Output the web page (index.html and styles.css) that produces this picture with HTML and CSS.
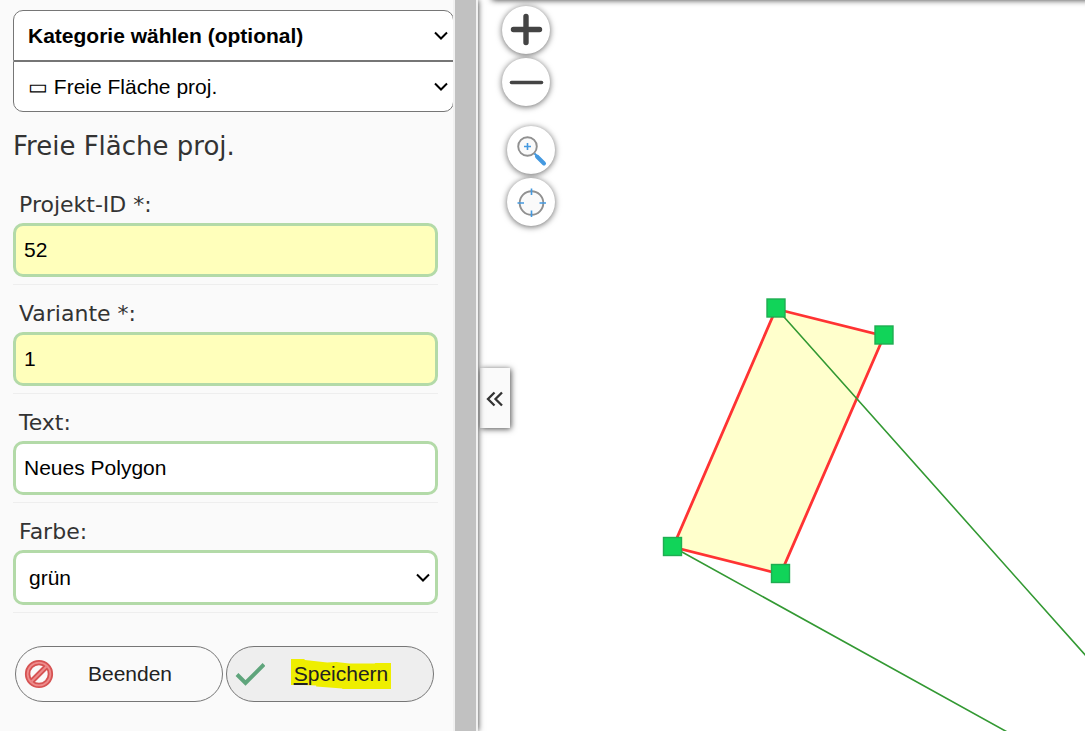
FILE: index.html
```html
<!DOCTYPE html>
<html lang="de">
<head>
<meta charset="utf-8">
<title>Freie Fläche proj.</title>
<link rel="stylesheet" href="styles.css">
</head>
<body>
<div class="app">
  <aside class="sidebar">
    <form class="panel">
      <div class="pickers">
        <select class="picker picker-category" aria-label="Kategorie">
          <option>Kategorie wählen (optional)</option>
        </select>
        <select class="picker picker-theme" aria-label="Thema">
          <option>▭ Freie Fläche proj.</option>
        </select>
      </div>
      <h1 class="title">Freie Fläche proj.</h1>
      <div class="row">
        <label class="label" for="project">Projekt-ID *:</label>
        <input class="field required" id="project" type="text" value="52">
      </div>
      <div class="row">
        <label class="label" for="variant">Variante *:</label>
        <input class="field required" id="variant" type="text" value="1">
      </div>
      <div class="row">
        <label class="label" for="text">Text:</label>
        <input class="field" id="text" type="text" value="Neues Polygon">
      </div>
      <div class="row">
        <label class="label" for="color">Farbe:</label>
        <select class="field field-select" id="color"><option>grün</option></select>
      </div>
      <div class="actions">
        <button class="action" type="button">
          <svg class="action-icon" viewBox="0 0 30 30" aria-hidden="true">
            <g fill="none" stroke="#d65353" stroke-width="5.400"><circle cx="15" cy="15" r="11.400"/><path d="M7.500 22.500l15-15"/></g>
            <g fill="none" stroke="#ee8c8c" stroke-width="1.800"><circle cx="15" cy="15" r="11.400"/><path d="M7.500 22.500l15-15"/></g>
          </svg>
          <span class="action-text">Beenden</span>
        </button>
        <button class="action action-save" type="button">
          <svg class="action-icon" viewBox="0 0 30 30" aria-hidden="true">
            <path d="M2 15.500l8.500 8.500L29 5.500" fill="none" stroke="#5fa57c" stroke-width="4"/>
          </svg>
          <span class="action-text marked">
            <svg class="marker" viewBox="0 0 100 30" preserveAspectRatio="none" aria-hidden="true"><path d="M0 0H13L14 1L36 3.500L45 3L58 4.500H83L84 4H100V30H51V29.500L25 27.500V26.500L12 26H0z" fill="#eeee00"/></svg>
            <span class="marked-text"><u>S</u>peichern</span>
          </span>
        </button>
      </div>
    </form>
    <div class="scrollbar"></div>
  </aside>
  <main class="map">
    <svg class="drawing" role="img" aria-label="Polygon">
      <g transform="translate(-478 0)">
        <path d="M776 309L884 336L780.500 574L673 547z" fill="#ffffcc" stroke="#ff3333" stroke-width="2.800"/>
        <path d="M776 308L1185 767M673 547L1103 785" fill="none" stroke="#339933" stroke-width="1.600"/>
        <g fill="#11d459" stroke="#1fad52" stroke-width="1.400">
          <rect x="767" y="299" width="18" height="18"/>
          <rect x="875" y="326" width="18" height="18"/>
          <rect x="663.500" y="537.500" width="18" height="18"/>
          <rect x="771.500" y="564.500" width="18" height="18"/>
        </g>
      </g>
    </svg>
    <div class="top-shadow"></div>
    <div class="tools">
      <div class="tool-group">
        <button class="tool" type="button" aria-label="Vergrößern"><svg viewBox="0 0 48 48"><path d="M24 10.500v26M11.500 23.500h26" stroke="#444" stroke-width="5.400" stroke-linecap="round"/></svg></button>
        <button class="tool" type="button" aria-label="Verkleinern"><svg viewBox="0 0 48 48"><path d="M9.500 24.500h30" stroke="#444" stroke-width="3.600" stroke-linecap="round"/></svg></button>
      </div>
      <div class="tool-group tool-group-inset">
        <button class="tool" type="button" aria-label="Zoom auf Bereich"><svg viewBox="0 0 48 48"><circle cx="20.500" cy="20.500" r="9.300" fill="#fafafa" stroke="#909090" stroke-width="1.900"/><path d="M20.500 17v7M17 20.500h7" stroke="#4499e0" stroke-width="1.600"/><path d="M27.500 27.500l3 3" stroke="#4499e0" stroke-width="2"/><path d="M30 30.500l7 7" stroke="#4499e0" stroke-width="4" stroke-linecap="round"/></svg></button>
        <button class="tool" type="button" aria-label="Standort"><svg viewBox="0 0 48 48"><circle cx="24.500" cy="25" r="11.800" fill="#fafafa" stroke="#909090" stroke-width="1.900"/><path d="M24.500 10.500v6.500M24.500 32.500v6.500M10.500 25h6.500M32.500 25h6.500" stroke="#4499e0" stroke-width="1.600"/></svg></button>
      </div>
    </div>
    <button class="collapse" type="button" aria-label="Einklappen"><svg viewBox="0 0 30 60"><path d="M14.500 24.500l-6.500 6.500 6.500 6.500M22 24.500l-6.500 6.500 6.500 6.500" fill="none" stroke="#333" stroke-width="2.300"/></svg></button>
  </main>
</div>
</body>
</html>
```

FILE: styles.css
```css
* { box-sizing: border-box; }
body { margin: 0; background: #fff; }
.app {
  display: flex;
  height: 100vh;
  overflow: hidden;
  font-family: "Liberation Sans", Arial, sans-serif;
  font-size: 21px;
}
.sidebar {
  display: flex;
  flex: 0 0 478px;
  background: #fafafa;
  box-shadow: 0 0 6px rgba(0, 0, 0, 0.8);
  z-index: 1;
}
.panel {
  flex: 1;
  min-width: 0;
  overflow: hidden;
  padding: 10px 15px 0 13px;
}
.scrollbar {
  width: 25px;
  background: #c1c1c1;
  border: solid #f1f1f1;
  border-width: 0 2px;
}
.pickers {
  display: flex;
  flex-direction: column;
  margin-right: -16px;
}
select {
  appearance: none;
  background: #fff url("data:image/svg+xml,%3Csvg xmlns='http://www.w3.org/2000/svg' width='14' height='9'%3E%3Cpath d='M1 1.500l6 6 6-6' fill='none' stroke='black' stroke-width='2'/%3E%3C/svg%3E") no-repeat right 5px center;
}
.picker {
  height: 51px;
  padding: 0 14px;
  border: 1px solid #767676;
  font: inherit;
  color: #000;
}
.picker-category { border-radius: 10px 10px 0 0; font-weight: bold; }
.picker-theme { border-radius: 0 0 10px 10px; }
.title {
  margin: 0;
  padding: 18px 0 14px;
  font: 26px/32px "DejaVu Sans", Verdana, sans-serif;
  color: #333;
}
.row {
  display: flex;
  flex-direction: column;
  padding: 15px 0 7px;
  border-bottom: 1px solid #eee;
}
.label {
  height: 32px;
  padding-left: 6px;
  font: 22px/28px "DejaVu Sans", Verdana, sans-serif;
  color: #333;
}
.field {
  width: 100%;
  height: 54px;
  padding: 0 8px;
  border: 3px solid #b3daa8;
  border-radius: 10px;
  background-color: #fff;
  font: inherit;
  color: #000;
}
.required { background-color: #ffffbb; }
.field-select { height: 55px; padding: 0 13px; }
.actions {
  display: flex;
  gap: 3px;
  padding: 33px 4px 0 2px;
}
.action {
  display: flex;
  flex: 1;
  align-items: center;
  height: 56px;
  padding: 0 16px 0 8px;
  border: 1px solid #767676;
  border-radius: 28px;
  background: #fafafa;
  font: inherit;
  color: #222;
}
.action-save { background: #eee; }
.action-icon { width: 30px; height: 30px; }
.action-text { margin: 0 auto; }
.marked {
  position: relative;
  padding: 3px;
}
.marker {
  position: absolute;
  inset: 0;
  width: 100%;
  height: 100%;
}
.marked-text { position: relative; }
.map { position: relative; flex: 1; overflow: hidden; }
.drawing {
  position: absolute;
  inset: 0;
  width: 100%;
  height: 100%;
}
.top-shadow {
  position: absolute;
  inset: -10px -10px auto 14px;
  height: 10px;
  box-shadow: 0 0 6px rgba(0, 0, 0, 0.8);
}
.tools {
  position: absolute;
  top: 6px;
  left: 24px;
  display: flex;
  flex-direction: column;
  gap: 20px;
}
.tool-group {
  display: flex;
  flex-direction: column;
  gap: 4px;
}
.tool-group-inset { padding-left: 5px; }
.tool {
  width: 48px;
  height: 48px;
  padding: 0;
  border: 0;
  border-radius: 50%;
  background: #fff;
  box-shadow: 0 1px 6px rgba(0, 0, 0, 0.6);
}
.tool svg, .collapse svg { display: block; width: 100%; height: 100%; }
.collapse {
  position: absolute;
  top: 368px;
  left: 2px;
  width: 30px;
  height: 60px;
  padding: 0;
  border: 0;
  background: #fafafa;
  box-shadow: 1px 1px 6px rgba(0, 0, 0, 0.7);
}
```
